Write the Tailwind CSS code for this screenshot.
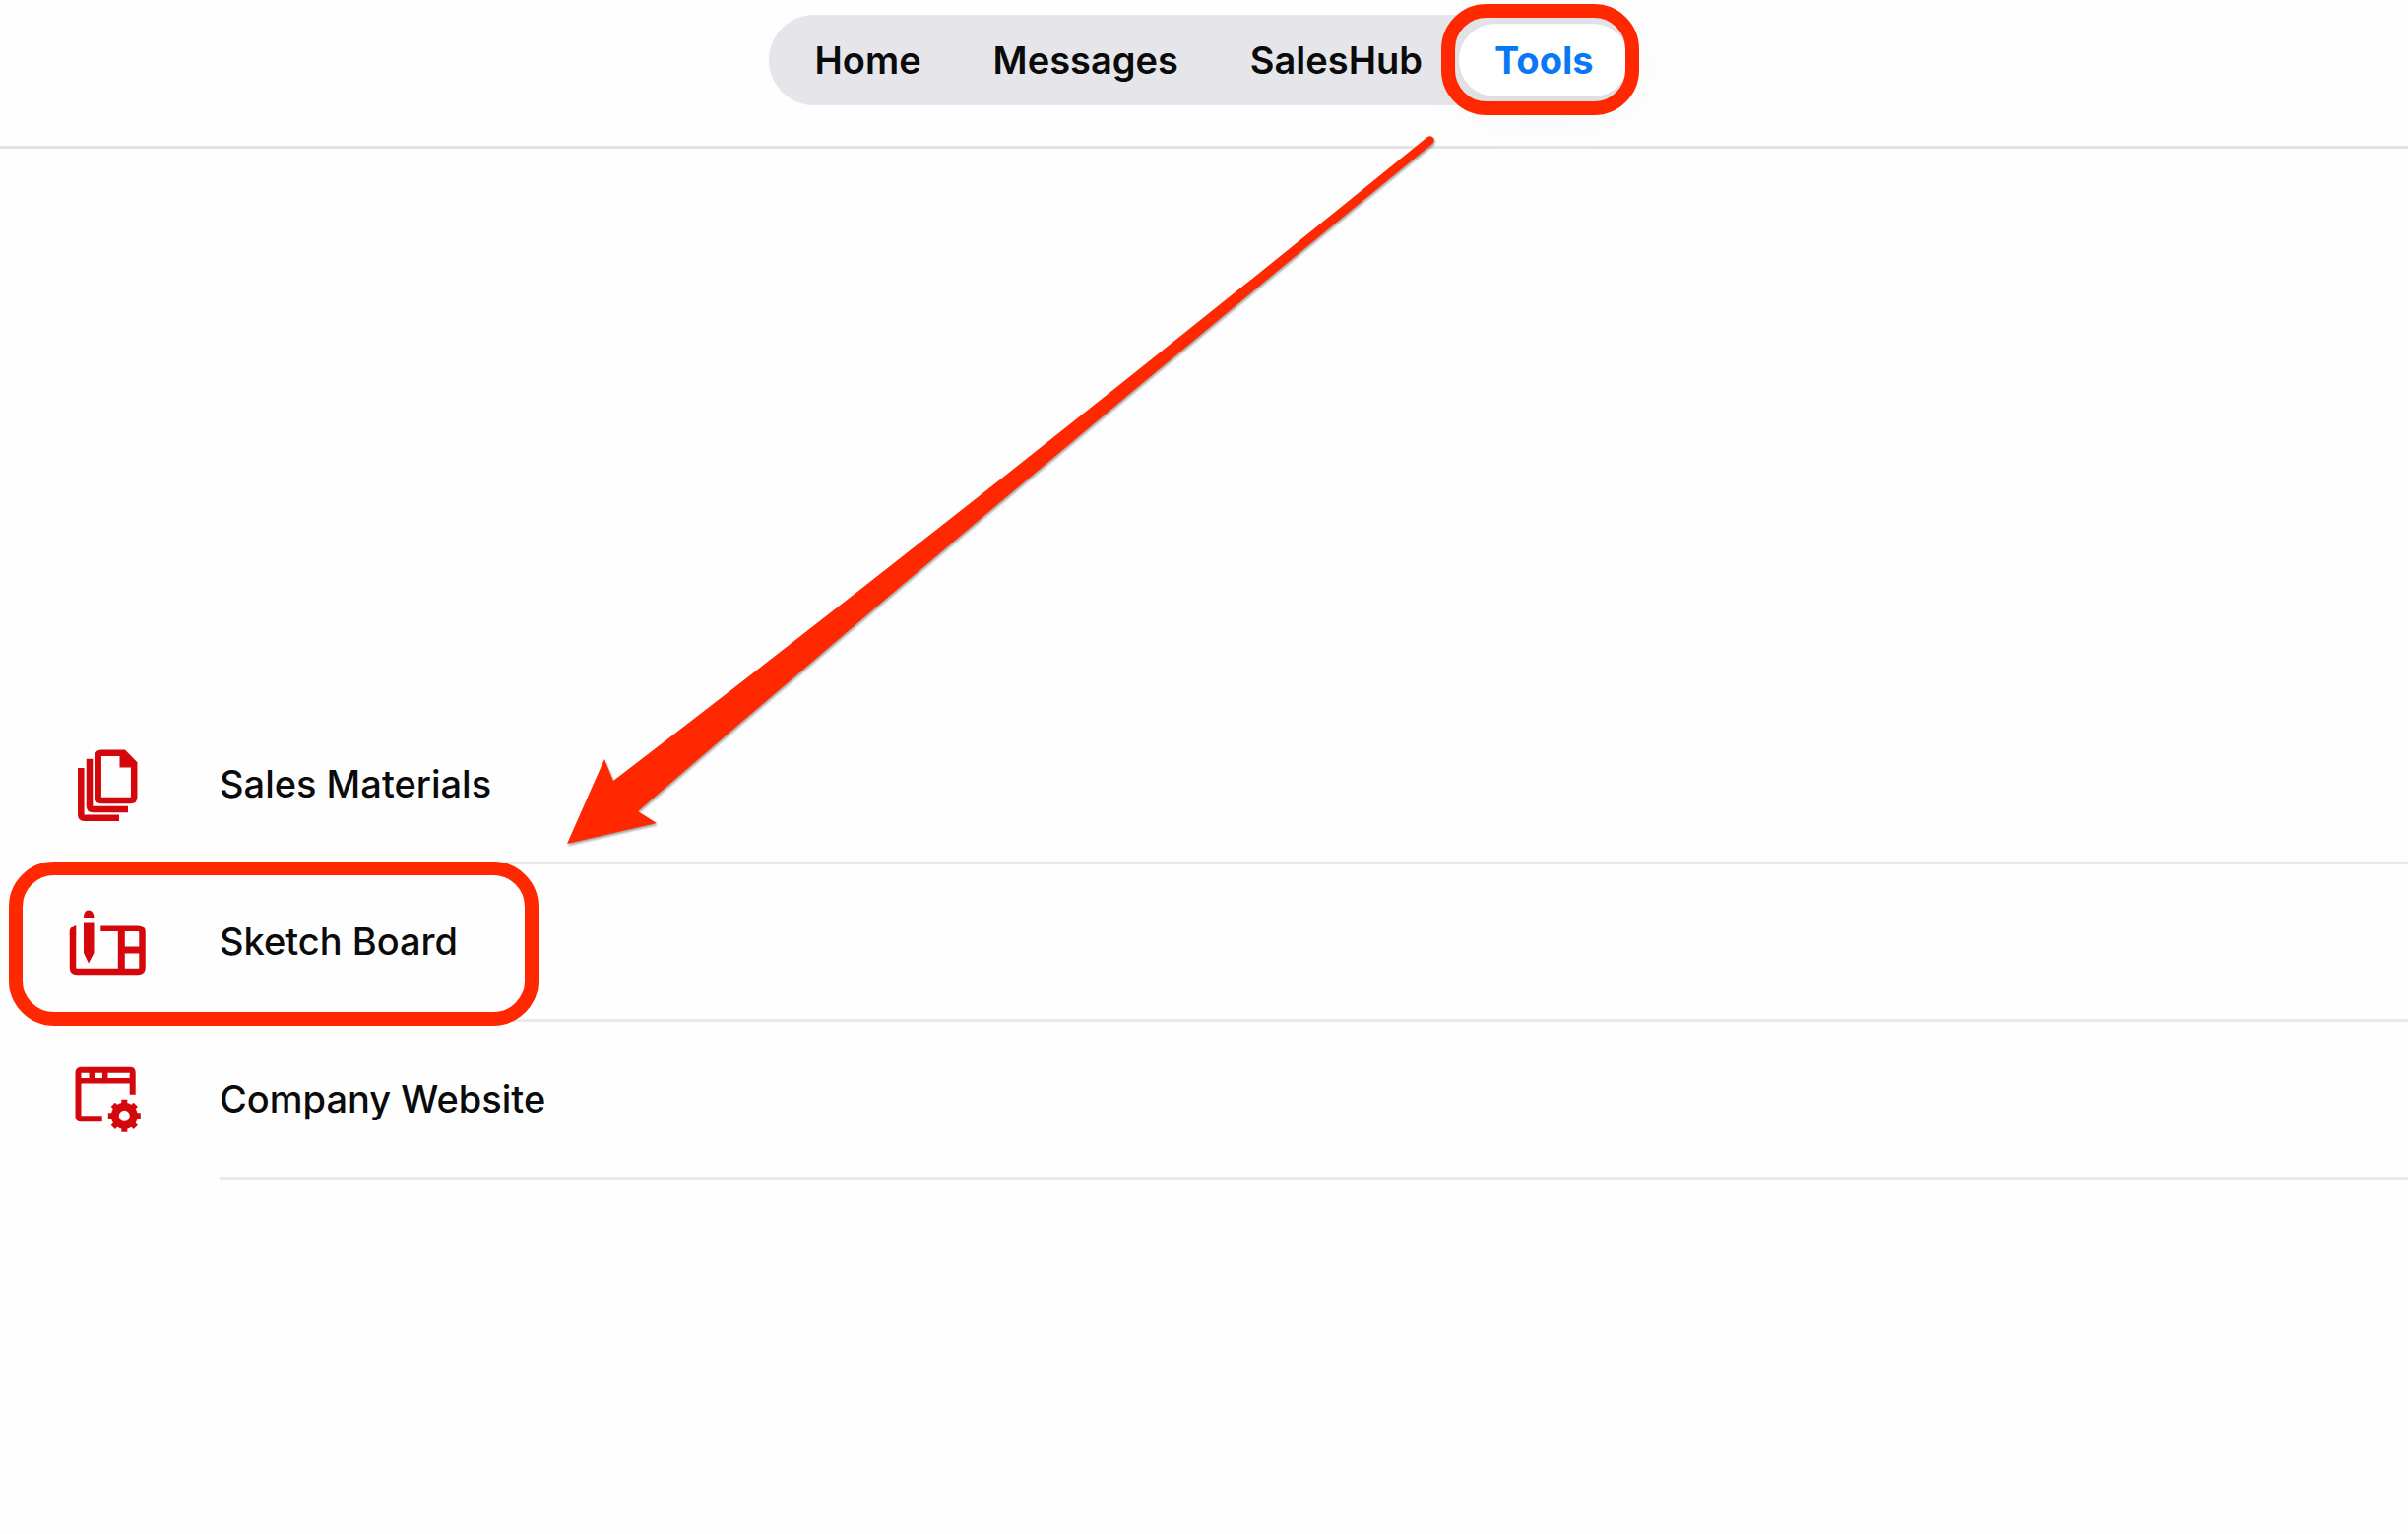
<!DOCTYPE html>
<html lang="en">

<head>
  <meta charset="UTF-8">
  <meta name="viewport" content="width=device-width, initial-scale=1.0">
  <title>Tools</title>
  <script src="https://cdn.jsdelivr.net/npm/@tailwindcss/browser@4"></script>
</head>

<body class="relative min-h-screen overflow-x-hidden bg-[#fefefe] font-['Inter',sans-serif] text-[#0b0b0c]">
  <header class="flex h-[151px] items-start justify-center border-b-3 border-[#e3e3e3] pt-[15px]">
    <nav class="flex h-[92px] items-center gap-px rounded-full bg-[#e5e5ea] px-[10px] text-[38px] font-semibold">
      <a href="#" class="px-[36px]">Home</a>
      <a href="#" class="px-[36px]">Messages</a>
      <a href="#" class="px-[36px]">SalesHub</a>
      <a href="#" aria-current="page" class="relative flex h-[74px] items-center rounded-full bg-white px-[36px] font-bold text-[#0a78f5] shadow-[0_8px_60px_rgba(0,0,0,0.06)]">
        Tools
        <!-- highlight ring -->
        <span class="absolute -bottom-[19px] -left-[18px] -right-[10px] -top-[20px] rounded-[46px] border-14 border-[#ff2800]"></span>
      </a>
    </nav>
  </header>

  <main class="pt-[567px]">
    <ul class="text-[38px] font-medium">
      <li>
        <a href="#" class="flex h-40 items-center">
          <span class="w-[223px] shrink-0 pl-[68px]">
            <svg class="size-20" viewBox="0 0 80 80" fill="none" stroke="#d4080c" stroke-width="6.5">
              <path d="M14.3 22V69.5Q14.3 72.7 17.5 72.7H53" />
              <path d="M23 12.7V60.5Q23 64 26.500 64H62" />
              <path d="M35 6.700H57.500L68.200 17.500V51.500Q68.200 55 64.700 55H35Q31.700 55 31.700 51.500V10Q31.700 6.700 35 6.700Z" />
              <path d="M53.500 5V21.500H69V17L58 6Z" fill="#d4080c" stroke="none" />
            </svg>
          </span>
          <span class="flex h-full flex-1 items-center border-b-3 border-[#e9e9e9]">Sales Materials</span>
        </a>
      </li>
      <li>
        <a href="#" class="relative flex h-40 items-center">
          <span class="w-[223px] shrink-0 pl-[68px]">
            <svg class="size-20" viewBox="0 0 80 80" fill="none" stroke="#d4080c" stroke-width="6.5">
              <path d="M6 30V65Q6 69 10 69H72Q76.500 69 76.500 65V29Q76.500 24.700 72 24.700H34.300" />
              <path d="M55.300 25V69M55.300 47H76" stroke-width="7" />
              <path d="M2.700 31V28Q3 23 9.300 21V31ZM17 14Q17 6.500 22 6.500T27.500 14ZM17 18.500H27.500V50L22 60.500L17 50Z" fill="#d4080c" stroke="none" />
            </svg>
          </span>
          <span class="flex h-full flex-1 items-center border-b-3 border-[#e9e9e9]">Sketch Board</span>
          <!-- highlight ring -->
          <span class="absolute -bottom-1 -top-[3px] left-[9px] w-[538px] rounded-[46px] border-14 border-[#ff2800]"></span>
        </a>
      </li>
      <li>
        <a href="#" class="flex h-40 items-center">
          <span class="w-[223px] shrink-0 pl-[68px]">
            <svg class="size-20" viewBox="0 0 80 80" fill="none" stroke="#d4080c" stroke-width="6">
              <path d="M35.700 58.300H14Q11.500 58.300 11.500 55.500V11.500Q11.500 8.700 14 8.700H64Q66.700 8.700 66.700 11.500V33.700" />
              <path d="M12 19.700H66M25.300 9V20M38.700 9V20" stroke-width="5.500" />
              <circle cx="58.300" cy="55.300" r="9.500" stroke-width="8" />
              <path d="M58.300 38.800V44M58.300 66.600V71.800M41.800 55.300H47M69.600 55.300H74.800M46.800 43.800L50.300 47.300M66.300 63.300L69.800 66.800M69.800 43.800L66.300 47.300M50.300 63.300L46.800 66.800" stroke-width="6" />
            </svg>
          </span>
          <span class="flex h-full flex-1 items-center border-b-3 border-[#e9e9e9]">Company Website</span>
        </a>
      </li>
    </ul>
  </main>

  <!-- arrow from the Tools tab to Sketch Board -->
  <svg class="pointer-events-none absolute left-0 top-0 h-[900px] w-[1500px] drop-shadow-[1px_2px_1px_rgba(0,0,0,0.35)]" viewBox="0 0 1500 900" fill="#ff2800">
    <path d="M576 857L614 771L623 793Q1036 476 1450 139Q1454 137 1456 140T1455 146Q1052 475 648 824L667 836Z" />
  </svg>
</body>

</html>
